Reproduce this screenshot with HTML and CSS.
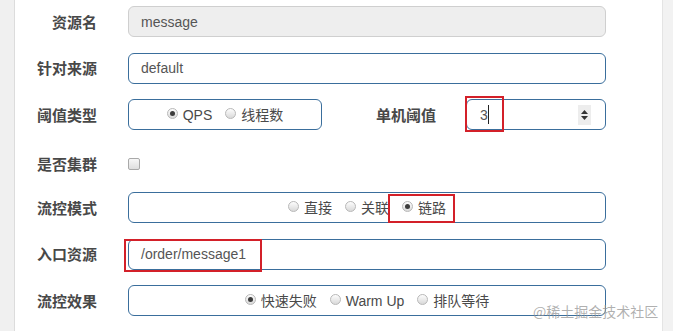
FILE: index.html
```html
<!DOCTYPE html>
<html lang="zh">
<head>
<meta charset="utf-8">
<title>流控规则</title>
<link rel="stylesheet" href="styles.css">
</head>
<body>
<div class="page">
  <div class="side-left"></div>
  <div class="main">
    <div class="row">
      <div class="label">资源名</div>
      <div class="field input disabled">message</div>
    </div>
    <div class="row">
      <div class="label">针对来源</div>
      <div class="field input">default</div>
    </div>
    <div class="row">
      <div class="label">阈值类型</div>
      <div class="group small">
        <span class="opt"><span class="radio on"></span>QPS</span>
        <span class="opt"><span class="radio"></span>线程数</span>
      </div>
      <div class="label mid">单机阈值</div>
      <div class="num input">
        <span class="val">3</span><span class="caret"></span>
        <span class="spin"><svg width="9" height="12" viewBox="0 0 9 12"><path d="M4.5 1 L8 5 L1 5 Z M1 7 L8 7 L4.5 11 Z" fill="#333"/></svg></span>
        <span class="mark mark-num"></span>
      </div>
    </div>
    <div class="row check">
      <div class="label">是否集群</div>
      <span class="checkbox"></span>
    </div>
    <div class="row">
      <div class="label">流控模式</div>
      <div class="group wide">
        <span class="opt"><span class="radio"></span>直接</span>
        <span class="opt"><span class="radio"></span>关联</span>
        <span class="opt marked"><span class="radio on"></span>链路<span class="mark mark-link"></span></span>
      </div>
    </div>
    <div class="row">
      <div class="label">入口资源</div>
      <div class="field input">/order/message1<span class="mark mark-entry"></span></div>
    </div>
    <div class="row">
      <div class="label">流控效果</div>
      <div class="group wide">
        <span class="opt"><span class="radio on"></span>快速失败</span>
        <span class="opt"><span class="radio"></span>Warm Up</span>
        <span class="opt"><span class="radio"></span>排队等待</span>
      </div>
    </div>
  </div>
  <div class="side-right"></div>
  <div class="watermark">@稀土掘金技术社区</div>
</div>
</body>
</html>
```
FILE: styles.css
```css
html, body {
  margin: 0;
  padding: 0;
  background: #fff;
}
body {
  font-family: "Liberation Sans", Arial, "Noto Sans CJK SC", sans-serif;
  font-size: 14px;
  color: #555;
}
.page {
  position: relative;
  display: flex;
  width: 673px;
  height: 331px;
  overflow: hidden;
}
.side-left {
  width: 14px;
  background: #f0f0f0;
  border-right: 1px solid #dcdcdc;
  flex: none;
}
.side-right {
  width: 10px;
  background: #f2f2f2;
  border-left: 1px solid #e4e4e4;
  flex: none;
}
.main {
  flex: 1;
  padding-top: 6px;
  display: flex;
  flex-direction: column;
  gap: 15.5px;
}
.row {
  display: flex;
  align-items: center;
  height: 31px;
}
.row.check {
  box-sizing: border-box;
  padding-top: 6px;
}
.label {
  width: 82px;
  margin-right: 31px;
  flex: none;
  text-align: right;
  font-family: "Noto Sans CJK SC", sans-serif;
  font-weight: 700;
  font-size: 15px;
  color: #484848;
  line-height: 20px;
}
.label.mid {
  width: 114px;
  margin-right: 30px;
}
.input {
  position: relative;
  box-sizing: border-box;
  height: 31px;
  border: 1px solid #3a6e9c;
  border-radius: 6px;
  padding: 0 12px;
  display: flex;
  align-items: center;
  color: #555;
  font-size: 14px;
}
.field {
  width: 478px;
}
.input.disabled {
  background: #eee;
  border-color: #cfcfcf;
}
.num {
  width: 140px;
  padding-left: 13px;
}
.caret {
  display: inline-block;
  width: 1px;
  height: 19px;
  background: #222;
}
.spin {
  position: absolute;
  right: 14px;
  top: 5px;
  width: 13px;
  height: 20px;
  background: #ededed;
  display: flex;
  align-items: center;
  justify-content: center;
}
.group {
  box-sizing: border-box;
  height: 31px;
  border: 1px solid #3a6e9c;
  border-radius: 6px;
  display: flex;
  align-items: center;
  justify-content: center;
  gap: 13px;
  color: #4a4a4a;
  font-family: "Liberation Sans", Arial, "Noto Sans CJK SC", sans-serif;
}
.group.small {
  width: 194px;
  flex: none;
}
.group.wide {
  width: 478px;
}
.opt {
  position: relative;
  display: inline-flex;
  align-items: center;
  gap: 5px;
  line-height: 20px;
}
.radio {
  box-sizing: border-box;
  width: 11px;
  height: 11px;
  border-radius: 50%;
  border: 1px solid #b8b8b8;
  background: linear-gradient(#fdfdfd, #d9d9d9);
  display: inline-flex;
  align-items: center;
  justify-content: center;
  margin-top: -2px;
}
.radio.on::after {
  content: "";
  width: 5px;
  height: 5px;
  border-radius: 50%;
  background: #3c3c3c;
}
.checkbox {
  box-sizing: border-box;
  width: 12px;
  height: 12px;
  border: 1px solid #a9a9a9;
  border-radius: 2px;
  background: linear-gradient(#f7f7f7, #dedede);
}
.mark {
  position: absolute;
  border: 2px solid #d32029;
  box-sizing: border-box;
  pointer-events: none;
}
.mark-num {
  left: -2px;
  top: -4px;
  width: 39px;
  height: 36px;
}
.mark-link {
  left: -14px;
  top: -4px;
  width: 67px;
  height: 29px;
}
.mark-entry {
  left: -5px;
  top: -1px;
  width: 138px;
  height: 33px;
}
.watermark {
  position: absolute;
  left: 533px;
  top: 301px;
  font-family: "Noto Sans CJK SC", sans-serif;
  font-size: 14px;
  color: rgba(150, 150, 150, 0.75);
  line-height: 20px;
  white-space: nowrap;
}
```
